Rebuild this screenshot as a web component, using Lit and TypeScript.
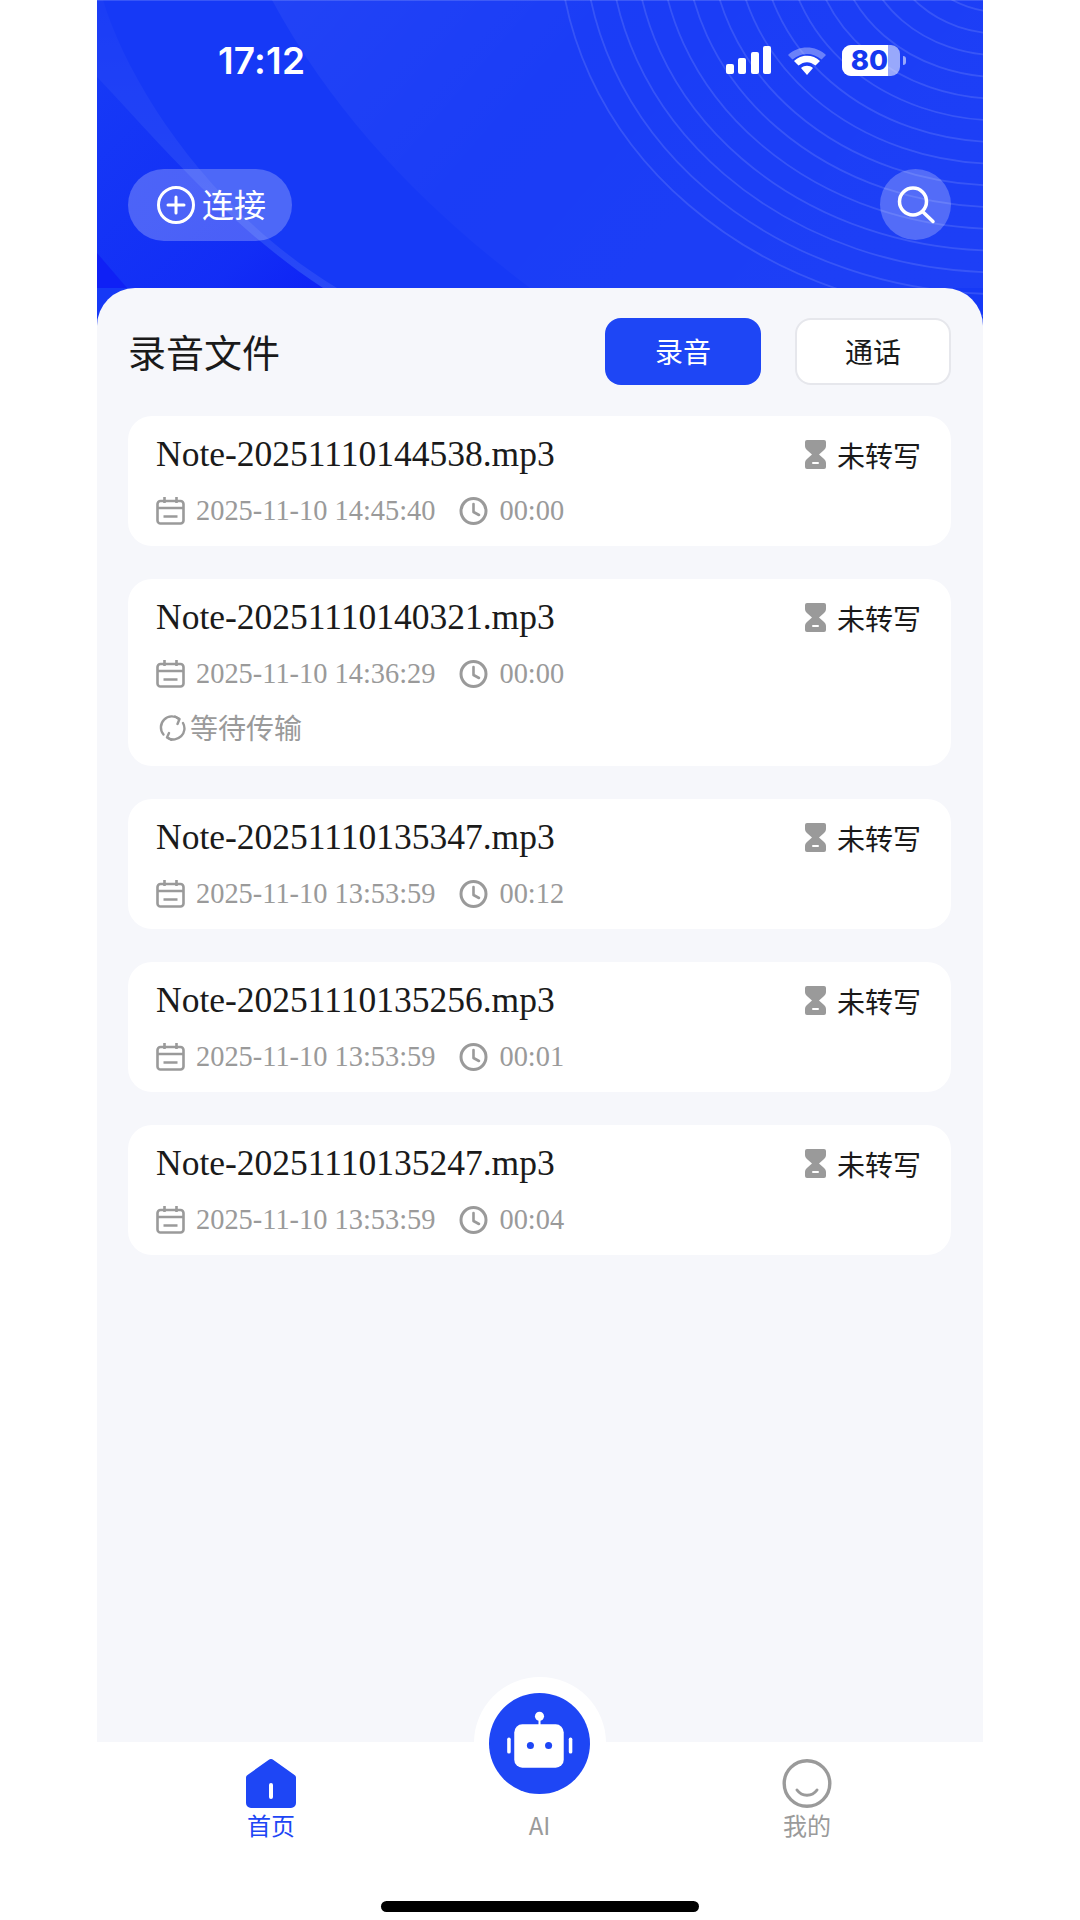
import { LitElement, html, css, svg } from "lit";
import { customElement } from "lit/decorators.js";

const records = [
  { name: "Note-20251110144538.mp3", date: "2025-11-10 14:45:40", dur: "00:00", waiting: false },
  { name: "Note-20251110140321.mp3", date: "2025-11-10 14:36:29", dur: "00:00", waiting: true },
  { name: "Note-20251110135347.mp3", date: "2025-11-10 13:53:59", dur: "00:12", waiting: false },
  { name: "Note-20251110135256.mp3", date: "2025-11-10 13:53:59", dur: "00:01", waiting: false },
  { name: "Note-20251110135247.mp3", date: "2025-11-10 13:53:59", dur: "00:04", waiting: false },
];

const rings = Array.from({ length: 15 }, (_, i) => 3.5 + i);

const calendar = html`<svg class="ic" width="29" height="28" viewBox="0 0 29 28" fill="none" stroke="#9a9a9a" stroke-width="2.6"><rect x="1.5" y="4" width="26" height="22.5" rx="3"/><path d="M1.5 11h26M7.5 19.5h14M8.5 0v6M20.5 0v6"/></svg>`;
const clock = html`<svg class="ic" width="29" height="28" viewBox="0 0 29 28" fill="none" stroke="#9a9a9a" stroke-width="3"><circle cx="14.5" cy="14" r="12.5"/><path d="M14.5 7v8l5.5 3" stroke-width="2.6" stroke-linecap="round" stroke-linejoin="round"/></svg>`;
const hourglass = html`<svg class="ic" width="21" height="29" viewBox="0 0 21 29"><path d="M2 0h17a2 2 0 0 1 2 2v4c0 2-1 3-2.500 4.500L14 14.500l4.500 4c1.500 1.500 2.500 2.500 2.500 4.500v4a2 2 0 0 1-2 2H2a2 2 0 0 1-2-2v-4c0-2 1-3 2.500-4.500l4.500-4-4.500-4C1 9 0 8 0 6V2a2 2 0 0 1 2-2z" fill="#9a9a9a"/><rect x="7" y="22" width="7" height="2" rx="1" fill="#fff"/></svg>`;
const sync = html`<svg class="ic" width="28" height="26" viewBox="0 0 28 26" fill="none" stroke="#9a9a9a" stroke-width="2.4" stroke-linecap="round" stroke-linejoin="round"><path d="M4.500 19.500A11 11 0 0 1 20 4"/><path d="M16 1.500l4.500 2.500-2 5"/><path d="M24 8a11 11 0 0 1-15 15"/><path d="M12.500 25L8 22.500l2-4.500"/></svg>`;

@customElement("app-root")
export class AppRoot extends LitElement {
  static styles = css`
    :host {
      display: block;
      width: 1080px;
      height: 1920px;
      background: #fff;
      font-family: "Noto Sans CJK SC", "Noto Sans", sans-serif;
      color: #1a1a1a;
      overflow: hidden;
    }
    .phone {
      width: 886px;
      height: 1920px;
      margin-left: 97px;
      display: flex;
      flex-direction: column;
    }
    .header {
      position: relative;
      height: 330px;
      flex: none;
      overflow: hidden;
      background: #1639f6;
    }
    .bg {
      position: absolute;
      inset: 0;
    }
    .status {
      position: relative;
      height: 120px;
      padding: 0 77px 0 121px;
      display: flex;
      align-items: center;
      justify-content: space-between;
      color: #fff;
    }
    .time {
      font-family: Inter, sans-serif;
      font-size: 37px;
      font-weight: 600;
      letter-spacing: 0.2px;
    }
    .indicators {
      display: flex;
      align-items: center;
    }
    .wifi {
      margin: 0 15px 0 16px;
    }
    .battery {
      display: flex;
      align-items: center;
      gap: 3px;
    }
    .batt-body {
      width: 58px;
      height: 31px;
      border-radius: 9px;
      display: flex;
      background: rgba(255, 255, 255, 0.55);
    }
    .batt-fill {
      width: 46px;
      border-radius: 9px 0 0 9px;
      background: #fff;
      color: #1538f0;
      font-family: Inter, sans-serif;
      font-size: 27.5px;
      font-weight: 800;
      line-height: 31px;
      text-align: right;
      white-space: nowrap;
    }
    .batt-cap {
      width: 3px;
      height: 9px;
      border-radius: 0 3px 3px 0;
      background: rgba(255, 255, 255, 0.55);
    }
    .actions {
      position: relative;
      margin-top: 49px;
      height: 72px;
      padding: 0 32px 0 31px;
      display: flex;
      justify-content: space-between;
    }
    .connect {
      width: 164px;
      height: 72px;
      border-radius: 36px;
      background: rgba(255, 255, 255, 0.24);
      display: flex;
      align-items: center;
      gap: 7px;
      padding: 0 0 0 29px;
      box-sizing: border-box;
      color: #fff;
      font-size: 32px;
    }
    .connect span {
      margin-bottom: 4px;
    }
    .search {
      width: 71px;
      height: 71px;
      border-radius: 50%;
      background: rgba(255, 255, 255, 0.24);
      display: flex;
      align-items: center;
      justify-content: center;
    }
    .body {
      position: relative;
      flex: 1;
      margin-top: -42px;
      background: #f6f7fb;
      border-radius: 38px 38px 0 0;
      padding: 30px 32px 0 31px;
      display: flex;
      flex-direction: column;
    }
    .title-row {
      height: 67px;
      display: flex;
      align-items: center;
    }
    .title {
      font-size: 38px;
      line-height: 67px;
      flex: 1;
      padding-bottom: 3px;
    }
    .tab {
      width: 156px;
      height: 67px;
      box-sizing: border-box;
      border-radius: 16px;
      font-size: 28px;
      display: flex;
      align-items: center;
      justify-content: center;
      padding-bottom: 2px;
    }
    .tab.on {
      background: #1e46f5;
      color: #fff;
      margin-right: 34px;
    }
    .tab.off {
      background: #fff;
      border: 2px solid #e6e7ec;
    }
    .list {
      margin-top: 31px;
      display: flex;
      flex-direction: column;
      gap: 33px;
    }
    .card {
      background: #fff;
      border-radius: 24px;
      padding: 14px 30px 12px 28px;
    }
    .top {
      display: flex;
      align-items: center;
      justify-content: space-between;
      height: 46px;
    }
    .name {
      font-family: "Liberation Serif", "Noto Sans CJK SC", serif;
      font-size: 35.5px;
      line-height: 46px;
      margin-top: 1px;
      color: #1a1a1a;
    }
    .state {
      display: flex;
      align-items: center;
      gap: 11px;
      font-size: 28px;
      margin-top: 3px;
    }
    .meta {
      margin-top: 12px;
      height: 46px;
      display: flex;
      align-items: center;
      font-family: "Liberation Serif", "Noto Sans CJK SC", serif;
      font-size: 28.4px;
      color: #9a9a9a;
    }
    .ic {
      flex: none;
    }
    .date {
      margin: 0 24px 0 11px;
    }
    .dur {
      margin-left: 11px;
    }
    .wait {
      margin: 8px 0 3px 3px;
      height: 46px;
      display: flex;
      align-items: center;
      gap: 3px;
      font-size: 28px;
      color: #9a9a9a;
    }
    .wait span {
      margin-bottom: 3px;
    }
    .nav {
      margin: auto -32px 0 -31px;
      height: 178px;
      background: #fff;
      display: flex;
      flex-direction: column;
    }
    .nav-row {
      display: flex;
      justify-content: space-between;
      padding: 17px 146px 0 144px;
    }
    .item {
      position: relative;
      width: 60px;
      display: flex;
      flex-direction: column;
      align-items: center;
      font-size: 24px;
      line-height: 36px;
      color: #9a9a9a;
    }
    .item span {
      margin-top: -1px;
    }
    .item.on {
      color: #1e46f5;
    }
    .slot {
      height: 49px;
    }
    .ai-label {
      margin-left: 1px;
    }
    .bump {
      position: absolute;
      top: -82px;
      left: -35px;
      width: 132px;
      height: 132px;
      border-radius: 50%;
      background: #fff;
      display: flex;
      align-items: center;
      justify-content: center;
    }
    .bump svg {
      margin-left: -2px;
    }
    .home-bar {
      margin: auto 0 8px;
      align-self: center;
      width: 318px;
      height: 11px;
      border-radius: 6px;
      background: #000;
    }
  `;

  render() {
    return html`
      <div class="phone">
        <div class="header">
          <svg class="bg" width="886" height="330" viewBox="0 0 886 330">
            <defs>
              <linearGradient id="lg1" x1="0" y1="0" x2="1" y2="0.35">
                <stop offset="0" stop-color="#fff" stop-opacity=".05"/>
                <stop offset=".45" stop-color="#fff" stop-opacity=".02"/>
                <stop offset="1" stop-color="#fff" stop-opacity=".03"/>
              </linearGradient>
              <linearGradient id="lg2" x1="0" y1="0" x2="0" y2="1">
                <stop offset="0" stop-color="#fff" stop-opacity=".02"/>
                <stop offset="1" stop-color="#fff" stop-opacity=".08"/>
              </linearGradient>
              <linearGradient id="lg3" x1="0" y1="0" x2="1" y2="1">
                <stop offset="0" stop-color="#0c1cf5" stop-opacity="0"/>
                <stop offset=".75" stop-color="#0c1cf5" stop-opacity=".4"/>
                <stop offset="1" stop-color="#0c1cf5" stop-opacity=".75"/>
              </linearGradient>
            </defs>
            <path d="M175 0C240 120 330 210 433 288L886 288V0Z" fill="url(#lg1)"/>
            <path d="M0 77C60 140 130 225 226 288H0Z" fill="url(#lg3)"/>
            <path d="M6 0C30 80 110 210 240 288H226C130 225 60 140 0 77V0Z" fill="url(#lg2)"/>
            <path d="M0 253L30 288H0Z" fill="#0f20f5"/>
            <g fill="none" stroke="#fff" stroke-opacity=".12" stroke-width="1.800">
              ${rings.map((k) => svg`<ellipse cx="903" cy="-64" rx=${25.2 * k} ry=${21.7 * k}/>`)}
            </g>
            <rect width="886" height="1" fill="#fff" fill-opacity=".15"/>
          </svg>
          <div class="status">
            <span class="time">17:12</span>
            <div class="indicators">
              <svg width="45" height="28" viewBox="0 0 45 28" fill="#fff">
                <rect x="0" y="18" width="8" height="10" rx="2"/>
                <rect x="12" y="12" width="8" height="16" rx="2"/>
                <rect x="25" y="6" width="8" height="22" rx="2"/>
                <rect x="37" y="0" width="8" height="28" rx="2"/>
              </svg>
              <svg class="wifi" width="40" height="29" viewBox="0 0 40 29">
                <path d="M1 9C11 -1 29 -1 39 9l-4.500 4.500C26 6 14 6 5.500 13.500Z" fill="#fff" fill-opacity=".35"/>
                <path d="M7 15C14 8 26 8 33 15l-4.500 4.500C23 15 17 15 11.500 19.500Z" fill="#fff"/>
                <path d="M14 22c3.500-3 8.500-3 12 0l-6 7Z" fill="#fff"/>
              </svg>
              <div class="battery">
                <div class="batt-body"><div class="batt-fill">80</div></div>
                <div class="batt-cap"></div>
              </div>
            </div>
          </div>
          <div class="actions">
            <div class="connect">
              <svg width="38" height="38" viewBox="0 0 38 38" fill="none" stroke="#fff" stroke-width="3" stroke-linecap="round"><circle cx="19" cy="19" r="17.500"/><path d="M11 19h16M19 11v16"/></svg>
              <span>连接</span>
            </div>
            <div class="search">
              <svg width="40" height="40" viewBox="0 0 40 40" fill="none" stroke="#fff" stroke-width="3.500" stroke-linecap="round"><circle cx="17" cy="16.500" r="13.500"/><path d="M27 27l10 9.500"/></svg>
            </div>
          </div>
        </div>
        <div class="body">
          <div class="title-row">
            <div class="title">录音文件</div>
            <div class="tab on">录音</div>
            <div class="tab off">通话</div>
          </div>
          <div class="list">
            ${records.map(
              (r) => html`
                <div class="card">
                  <div class="top">
                    <span class="name">${r.name}</span>
                    <span class="state">${hourglass}未转写</span>
                  </div>
                  <div class="meta">
                    ${calendar}<span class="date">${r.date}</span>${clock}<span class="dur">${r.dur}</span>
                  </div>
                  ${r.waiting ? html`<div class="wait">${sync}<span>等待传输</span></div>` : ""}
                </div>
              `
            )}
          </div>
          <div class="nav">
            <div class="nav-row">
              <div class="item on">
                <svg class="slot" width="50" height="49" viewBox="0 0 50 49"><path d="M22.500 1a4 4 0 0 1 5 0L48.500 16a3 3 0 0 1 1.500 2.500V44a5 5 0 0 1-5 5H5a5 5 0 0 1-5-5V18.500A3 3 0 0 1 1.500 16Z" fill="#1e46f5"/><rect x="23" y="24" width="4" height="16" rx="2" fill="#fff"/></svg>
                <span>首页</span>
              </div>
              <div class="item">
                <div class="bump">
                  <svg width="101" height="101" viewBox="0 0 100 100">
                    <circle cx="50" cy="50" r="50" fill="#1e46f5"/>
                    <circle cx="50" cy="23" r="4.500" fill="#fff"/>
                    <rect x="49" y="25" width="2" height="8" fill="#fff"/>
                    <rect x="25" y="31" width="49" height="43" rx="8" fill="#fff"/>
                    <circle cx="41" cy="52" r="3.500" fill="#1e46f5"/>
                    <circle cx="59" cy="52" r="3.500" fill="#1e46f5"/>
                    <rect x="18" y="44" width="3.500" height="16" rx="1.700" fill="#fff"/>
                    <rect x="79" y="44" width="3.500" height="16" rx="1.700" fill="#fff"/>
                  </svg>
                </div>
                <div class="slot"></div>
                <span class="ai-label">AI</span>
              </div>
              <div class="item">
                <svg class="slot" width="50" height="49" viewBox="0 0 50 49" fill="none" stroke="#9a9a9a"><circle cx="25" cy="24.500" r="22.800" stroke-width="3.400"/><path d="M15 31c5 7 15 7 20 0" stroke-width="3" stroke-linecap="round"/></svg>
                <span>我的</span>
              </div>
            </div>
            <div class="home-bar"></div>
          </div>
        </div>
      </div>
    `;
  }
}
